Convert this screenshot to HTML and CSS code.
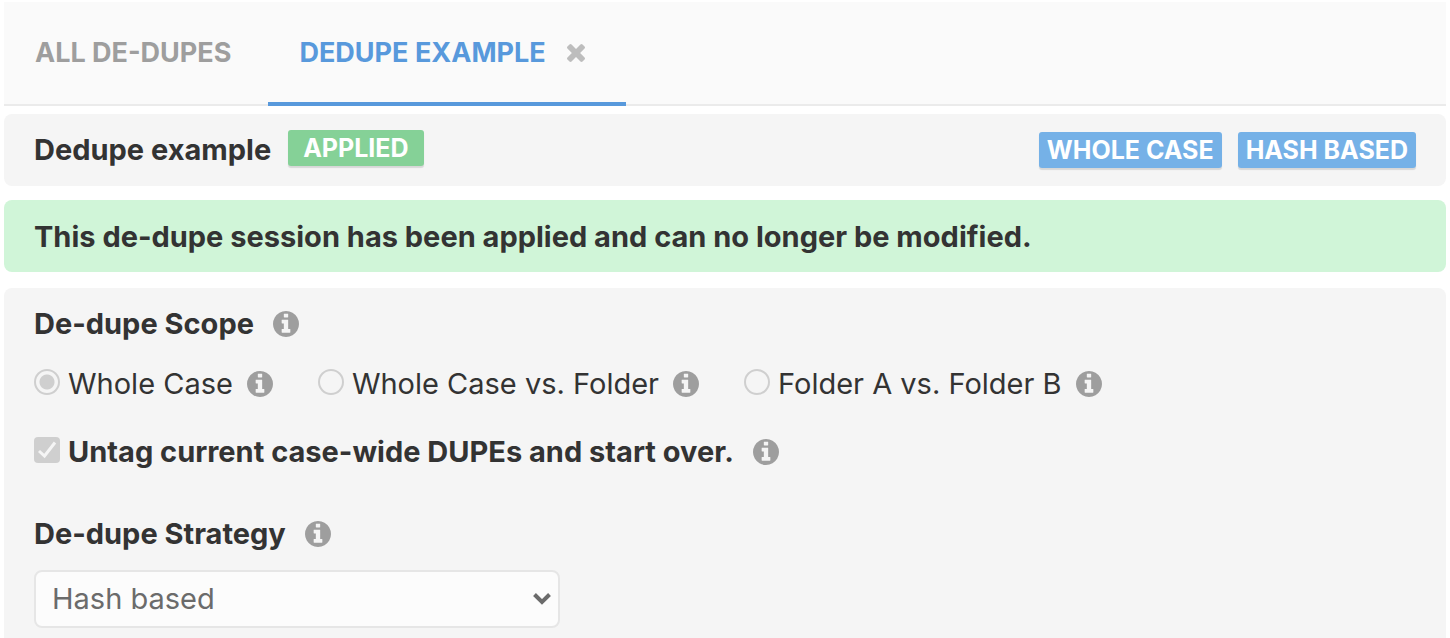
FILE: index.html
```html
<!DOCTYPE html>
<html lang="en">
<head>
<meta charset="utf-8">
<title>Dedupe example</title>
<link rel="stylesheet" href="styles.css">
</head>
<body>
<svg class="sprite" aria-hidden="true">
  <symbol id="info" viewBox="0 128 1536 1536"><path d="M1024 1376v-160q0-14-9-23t-23-9h-96v-512q0-14-9-23t-23-9h-320q-14 0-23 9t-9 23v160q0 14 9 23t23 9h96v320h-96q-14 0-23 9t-9 23v160q0 14 9 23t23 9h448q14 0 23-9t9-23zm-128-896v-160q0-14-9-23t-23-9h-192q-14 0-23 9t-9 23v160q0 14 9 23t23 9h192q14 0 23-9t9-23zm640 416q0 209-103 385.5t-279.5 279.5-385.5 103-385.5-103-279.5-279.5-103-385.5 103-385.5 279.5-279.5 385.5-103 385.5 103 279.5 279.5 103 385.5z"/></symbol>
</svg>
<nav class="tabs">
  <a class="tab" href="#all">ALL DE-DUPES</a>
  <div class="tab tab-active">
    <a class="tab-link" href="#example" aria-current="page">DEDUPE EXAMPLE</a>
    <button class="close" type="button" aria-label="Close tab"><svg class="close-icon" viewBox="110 366 1188 1188"><path d="M1298 1322q0 40-28 68l-136 136q-28 28-68 28t-68-28l-294-294-294 294q-28 28-68 28t-68-28l-136-136q-28-28-28-68t28-68l294-294-294-294q-28-28-28-68t28-68l136-136q28-28 68-28t68 28l294 294 294-294q28-28 68-28t68 28l136 136q28 28 28 68t-28 68l-294 294 294 294q28 28 28 68z"/></svg></button>
  </div>
</nav>
<main>
  <header class="summary">
    <h1 class="heading">Dedupe example</h1>
    <span class="badge badge-applied">APPLIED</span>
    <div class="badges">
      <span class="badge">WHOLE CASE</span>
      <span class="badge">HASH BASED</span>
    </div>
  </header>
  <p class="notice">This de-dupe session has been applied and can no longer be modified.</p>
  <form class="settings">
    <div class="row">
      <h2 class="heading" id="scope">De-dupe Scope</h2>
      <svg class="info"><use href="#info"/></svg>
    </div>
    <div class="row scope" role="radiogroup" aria-labelledby="scope">
      <div class="option">
        <input class="control radio" type="radio" name="scope" id="whole" checked disabled>
        <label for="whole">Whole Case</label>
        <svg class="info"><use href="#info"/></svg>
      </div>
      <div class="option">
        <input class="control radio" type="radio" name="scope" id="whole-folder" disabled>
        <label for="whole-folder">Whole Case vs. Folder</label>
        <svg class="info"><use href="#info"/></svg>
      </div>
      <div class="option">
        <input class="control radio" type="radio" name="scope" id="folders" disabled>
        <label for="folders">Folder A vs. Folder B</label>
        <svg class="info"><use href="#info"/></svg>
      </div>
    </div>
    <div class="row untag">
      <div class="option">
        <span class="check-box">
          <input class="control check" type="checkbox" id="untag" checked disabled>
          <svg class="tick" viewBox="0 0 26 26"><path d="M5 14L10.500 19L21 5.500"/></svg>
        </span>
        <label class="strong" for="untag">Untag current case-wide DUPEs and start over.</label>
        <svg class="info"><use href="#info"/></svg>
      </div>
    </div>
    <div class="row">
      <label class="heading" for="strategy">De-dupe Strategy</label>
      <svg class="info"><use href="#info"/></svg>
    </div>
    <div class="select-wrap">
      <select class="select" id="strategy" disabled><option>Hash based</option></select>
      <svg class="chevron" viewBox="0 0 18 12"><path d="M1.500 1.500L9 9L16.500 1.500"/></svg>
    </div>
  </form>
</main>
</body>
</html>
```
FILE: styles.css
```css
* {
  box-sizing: border-box;
}

body {
  margin: 0;
  padding: 2px 4px 0;
  background: #fff;
  color: #333;
  font: 400 29px/36px Inter, "Liberation Sans", sans-serif;
}

.sprite {
  display: none;
}

.tabs {
  display: flex;
  height: 104px;
  margin-bottom: 8px;
  background: #fafafa;
  box-shadow: inset 0 -2px #ebebeb;
  font-size: 27px;
  font-weight: 700;
}

.tab {
  display: flex;
  align-items: center;
  padding: 2px 37px 0 31px;
  color: #9e9e9e;
  text-decoration: none;
  border-bottom: 4px solid transparent;
}

.tab-active {
  gap: 21px;
  padding-right: 41px;
  border-color: #5899dc;
}

.tab-link {
  color: #5899dc;
  text-decoration: none;
}

.close {
  display: flex;
  padding: 0;
  border: 0;
  background: none;
}

.close-icon {
  width: 18px;
  height: 18px;
  fill: #bdbdbd;
}

.summary,
.notice {
  display: flex;
  align-items: center;
  min-height: 72px;
  padding: 0 30px;
  border-radius: 8px;
}

.summary {
  margin-bottom: 14px;
  background: #f5f5f5;
}

.heading,
.notice,
.strong {
  margin: 0;
  font-size: 29px;
  font-weight: 700;
}

.badge {
  padding: 0 8px;
  border-radius: 3px;
  background: #75b1e7;
  box-shadow: 0 2px 1px rgba(0, 0, 0, .12);
  color: #fff;
  font-size: 25px;
  font-weight: 700;
}

.badge-applied {
  margin: 0 0 4px 17px;
  padding: 0 15px;
  background: #85d197;
}

.badges {
  display: flex;
  gap: 16px;
  margin-left: auto;
}

.notice {
  margin-bottom: 16px;
  padding-top: 2px;
  background: #d0f5d8;
}

.settings {
  padding: 18px 30px 12px;
  border-radius: 8px 8px 0 0;
  background: #f5f5f5;
}

.row,
.option {
  display: flex;
  align-items: center;
}

.info {
  width: 26px;
  height: 26px;
  margin-left: 14px;
  fill: #9e9e9e;
}

.heading + .info,
.strong + .info {
  margin-left: 19px;
}

.scope {
  gap: 45px;
  margin: 24px 0 32px;
}

.untag {
  margin-bottom: 46px;
}

.control {
  display: block;
  appearance: none;
  width: 26px;
  height: 26px;
  margin: 0;
}

.option .radio,
.check-box {
  margin: 0 8px 5px 0;
}

.radio {
  border: 2px solid #cfcfcf;
  border-radius: 50%;
}

.radio:checked {
  background: radial-gradient(circle, #cfcfcf 7px, transparent 8px);
}

.check-box {
  position: relative;
}

.check {
  border-radius: 4px;
  background: #cfcfcf;
}

.tick {
  position: absolute;
  inset: 0;
  fill: none;
  stroke: #f5f5f5;
  stroke-width: 3;
}

.select-wrap {
  position: relative;
  max-width: 526px;
  margin-top: 18px;
}

.select {
  appearance: none;
  display: block;
  width: 100%;
  height: 58px;
  padding: 0 16px;
  border: 2px solid #e6e6e6;
  border-radius: 8px;
  background: #fcfcfc;
  color: #6b6b6b;
  font: inherit;
  opacity: 1;
}

.chevron {
  position: absolute;
  top: 23px;
  right: 9px;
  width: 18px;
  height: 12px;
  fill: none;
  stroke: #6b6b6b;
  stroke-width: 4;
}
```
